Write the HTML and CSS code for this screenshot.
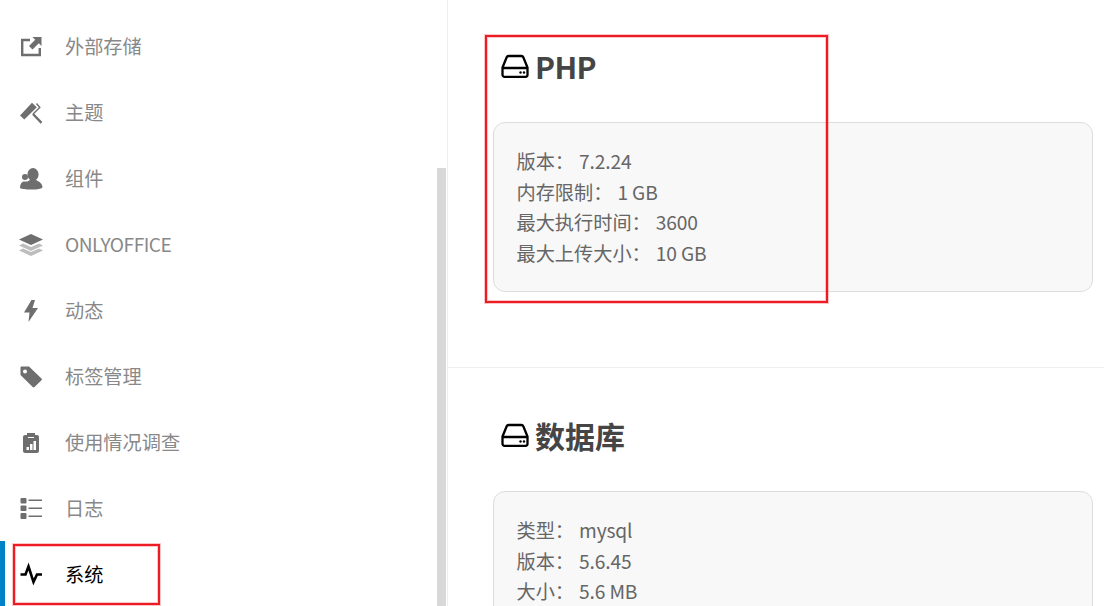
FILE: index.html
```html
<!DOCTYPE html>
<html lang="zh-CN">
<head>
<meta charset="utf-8">
<title>系统</title>
<link rel="stylesheet" href="styles.css">
</head>
<body>
<div class="page">
  <aside class="sidebar">
    <ul class="nav">
      <li class="nav-item">
        <svg class="nav-icon" viewBox="19 34 24 24"><path class="line" d="M30 40H22.200V55H39.800V48"/><path d="M32.500 37H41.500V46L38.800 43.300 32.500 49.500 29 46 35.200 39.700Z"/></svg>
        <span>外部存储</span>
      </li>
      <li class="nav-item">
        <svg class="nav-icon" viewBox="19 100 24 24"><path d="M20 115.500 32 102.800 36.800 107.300 24.300 119.500Z"/><path class="line hair" d="M36.500 103.500 39.800 107.500 33 114"/><path class="line" d="M33 114 41.500 122.800"/></svg>
        <span>主题</span>
      </li>
      <li class="nav-item">
        <svg class="nav-icon" viewBox="19 166 24 24"><ellipse cx="33" cy="174.500" rx="5.600" ry="6.500"/><path d="M20 188C20 184 21.500 182 23.500 181.500L27.500 181.500 30 180H36C40 182 42.500 184 42.500 187.500 41 189 37 189.500 33 189.500 28 189.500 22 189.500 20 188Z"/><circle cx="25" cy="177" r="3"/></svg>
        <span>组件</span>
      </li>
      <li class="nav-item">
        <svg class="nav-icon" viewBox="19 232 24 24"><path class="faded" d="M23 248.500 31 252 39 248.500 43 250.500 31 256 19 250.500Z"/><path class="faded" d="M23 243.500 31 247 39 243.500 43 245.500 31 251 19 245.500Z"/><path d="M31 234 43 239.500 31 245 19 239.500Z"/></svg>
        <span class="latin">ONLYOFFICE</span>
      </li>
      <li class="nav-item">
        <svg class="nav-icon" viewBox="19 298 24 24"><path d="M31.500 300 24 312.500H29.500L28.500 322 38 308H32.500L35 300Z"/></svg>
        <span>动态</span>
      </li>
      <li class="nav-item">
        <svg class="nav-icon" viewBox="19 364 24 24"><path fill-rule="evenodd" d="M21.500 366.500H29L41.500 378.500C42 379 42 379.800 41.500 380.300L34.500 387C34 387.500 33.200 387.500 32.700 387L20.500 375V367.500C20.500 367 21 366.500 21.500 366.500ZM25 369.500A2 2 0 1 0 25 373.500 2 2 0 1 0 25 369.500Z"/></svg>
        <span>标签管理</span>
      </li>
      <li class="nav-item">
        <svg class="nav-icon" viewBox="19 430 24 24"><path fill-rule="evenodd" d="M25 435H27V433H35V435H37C38.100 435 39 435.900 39 437V451C39 452.100 38.100 453 37 453H25C23.900 453 23 452.100 23 451V437C23 435.900 23.900 435 25 435ZM28 437V438H34V437ZM26.500 447V450H29V447ZM30 444V450H32.500V444ZM33.500 441V450H36V441Z"/></svg>
        <span>使用情况调查</span>
      </li>
      <li class="nav-item">
        <svg class="nav-icon" viewBox="19 496 24 24"><rect x="20.500" y="498" width="6" height="5.500" rx="1"/><rect x="20.500" y="505.500" width="6" height="5.500" rx="1"/><rect x="20.500" y="513" width="6" height="6" rx="1"/><path d="M28.500 499.500H42V501H28.500ZM28.500 507.500H42V509H28.500ZM28.500 515.500H42V517H28.500Z"/></svg>
        <span>日志</span>
      </li>
      <li class="nav-item active">
        <svg class="nav-icon" viewBox="19 562 24 24"><path class="line heavy" d="M20.500 574.500H25.500L28.500 566.500 33.500 582 37 574.500H42"/></svg>
        <span>系统</span>
      </li>
    </ul>
    <div class="scrollbar"></div>
  </aside>
  <main class="content">
    <section class="block">
      <h2 class="block-title">
        <svg class="hdd" viewBox="0 0 28 24"><path class="hdd-line" d="M7.500 2H20.500C21.300 2 22 2.500 22.300 3.200L26.500 13.500V20.800C26.500 21.900 25.600 22.800 24.500 22.800H3.500C2.400 22.800 1.500 21.900 1.500 20.800V13.500L5.700 3.200C6 2.500 6.700 2 7.500 2ZM1.500 14H26.500"/><circle cx="19.500" cy="18.500" r="1.200"/><circle cx="23" cy="18.500" r="1.200"/></svg>
        <span class="latin-title">PHP</span>
      </h2>
      <div class="info-card">
        <p>版本：<span class="val">7.2.24</span></p>
        <p>内存限制：<span class="val">1 GB</span></p>
        <p>最大执行时间：<span class="val">3600</span></p>
        <p>最大上传大小：<span class="val">10 GB</span></p>
      </div>
    </section>
    <section class="block">
      <h2 class="block-title">
        <svg class="hdd" viewBox="0 0 28 24"><path class="hdd-line" d="M7.500 2H20.500C21.300 2 22 2.500 22.300 3.200L26.500 13.500V20.800C26.500 21.900 25.600 22.800 24.500 22.800H3.500C2.400 22.800 1.500 21.900 1.500 20.800V13.500L5.700 3.200C6 2.500 6.700 2 7.500 2ZM1.500 14H26.500"/><circle cx="19.500" cy="18.500" r="1.200"/><circle cx="23" cy="18.500" r="1.200"/></svg>
        <span>数据库</span>
      </h2>
      <div class="info-card">
        <p>类型：<span class="val">mysql</span></p>
        <p>版本：<span class="val">5.6.45</span></p>
        <p>大小：<span class="val">5.6 MB</span></p>
      </div>
    </section>
  </main>
  <div class="mark mark-php"></div>
  <div class="mark mark-nav"></div>
</div>
</body>
</html>
```
FILE: styles.css
```css
* {
  box-sizing: border-box;
}

html,
body {
  margin: 0;
  height: 100%;
  overflow: hidden;
}

body {
  font-family: "Noto Sans CJK SC", "Open Sans", sans-serif;
  font-size: 19.2px;
  line-height: 30.72px;
  color: #666;
  background: #fff;
}

.page {
  position: relative;
  display: flex;
  height: 606px;
  overflow: hidden;
}

.sidebar {
  position: relative;
  flex: 0 0 448px;
  height: 606px;
  border-right: 1px solid #eee;
  padding-top: 13px;
  overflow: hidden;
}

.nav {
  list-style: none;
  margin: 0;
  padding: 0;
}

.nav-item {
  display: flex;
  align-items: center;
  height: 66px;
  padding-left: 19px;
  color: #888;
}

.nav-icon {
  flex: 0 0 24px;
  width: 24px;
  height: 24px;
  margin-right: 22px;
  fill: #6e6e6e;
}

.latin {
  letter-spacing: -0.5px;
}

.line {
  fill: none;
  stroke: #6e6e6e;
  stroke-width: 2.4;
}

.hair {
  stroke-width: 1.4;
}

.heavy {
  stroke: #000;
  stroke-width: 2.6;
}

.faded {
  fill: #bdbdbd;
}

.nav-item.active {
  color: #000;
  box-shadow: inset 5px 0 0 #0082c9;
}

.scrollbar {
  position: absolute;
  left: 437px;
  top: 168px;
  bottom: 0;
  width: 9px;
  background: #d8d8d8;
}

.content {
  flex: 1;
  min-width: 0;
  margin-top: -1px;
}

.block {
  padding: 45px 11px 75px 45px;
  border-bottom: 1px solid #eee;
}

.block-title {
  display: flex;
  align-items: center;
  gap: 6px;
  margin: 0 0 34px;
  padding-left: 8px;
  font-size: 30px;
  line-height: 44px;
  font-weight: 700;
  color: #454545;
}

.latin-title {
  letter-spacing: -0.6px;
}

.hdd {
  flex: 0 0 28px;
  width: 28px;
  height: 24px;
  fill: #000;
  overflow: visible;
}

.hdd-line {
  fill: none;
  stroke: #000;
  stroke-width: 2.300;
}

.info-card {
  padding: 23px 22px 22px 22.500px;
  background: #f8f8f8;
  border: 1px solid #ddd;
  border-radius: 12px;
}

.info-card p {
  margin: 0;
}

.val {
  margin-left: 5px;
  letter-spacing: -0.150px;
}

.mark {
  position: absolute;
  border: 2px solid #ed1c24;
  box-shadow: 0 0 0 1px rgba(237, 28, 36, 0.25), inset 0 0 0 1px rgba(237, 28, 36, 0.25);
  pointer-events: none;
}

.mark-php {
  left: 485px;
  top: 35px;
  width: 343px;
  height: 268px;
}

.mark-nav {
  left: 13px;
  top: 544px;
  width: 147px;
  height: 61px;
}
```
